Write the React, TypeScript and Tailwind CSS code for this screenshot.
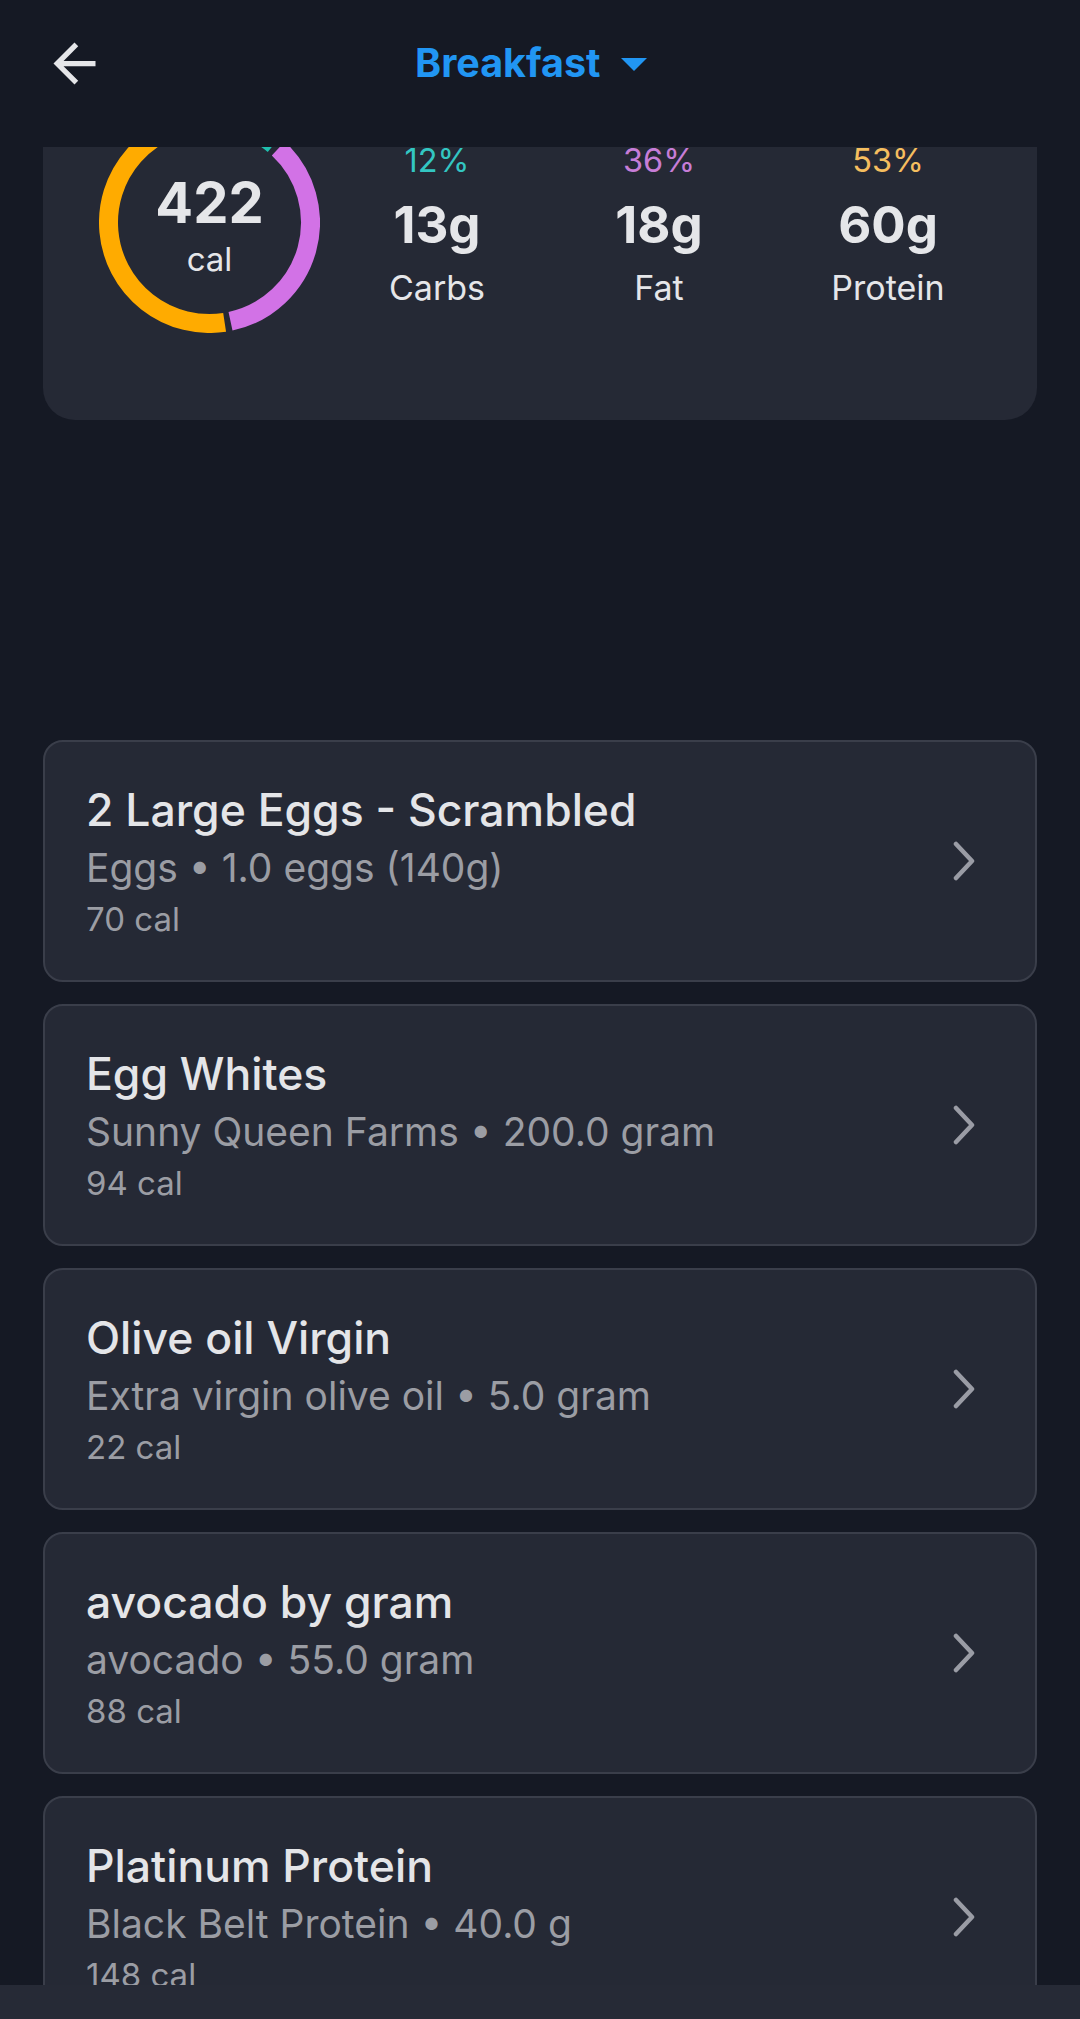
import React from 'react';

interface Food {
  name: string;
  detail: string;
  cal: number;
}

const foods: Food[] = [
  { name: '2 Large Eggs - Scrambled', detail: 'Eggs • 1.0 eggs (140g)', cal: 70 },
  { name: 'Egg Whites', detail: 'Sunny Queen Farms • 200.0 gram', cal: 94 },
  { name: 'Olive oil Virgin', detail: 'Extra virgin olive oil • 5.0 gram', cal: 22 },
  { name: 'avocado by gram', detail: 'avocado • 55.0 gram', cal: 88 },
  { name: 'Platinum Protein', detail: 'Black Belt Protein • 40.0 g', cal: 148 },
];

const macros = [
  { pct: '12%', grams: '13g', label: 'Carbs', color: 'text-[#33c6c2]', width: 'w-[222px]' },
  { pct: '36%', grams: '18g', label: 'Fat', color: 'text-[#c77dd7]', width: 'w-[222px]' },
  { pct: '53%', grams: '60g', label: 'Protein', color: 'text-[#f5be5f]', width: 'w-[236px]' },
];

// arco do anel, ângulos em graus a partir do topo no sentido horário
const arc = (cx: number, cy: number, r: number, from: number, to: number) => {
  const p = (a: number) => {
    const rad = (a * Math.PI) / 180;
    return `${cx + r * Math.sin(rad)} ${cy - r * Math.cos(rad)}`;
  };
  const large = to - from > 180 ? 1 : 0;
  return `M ${p(from)} A ${r} ${r} 0 ${large} 1 ${p(to)}`;
};

const CalorieRing: React.FC = () => {
  const total = 13 * 4 + 18 * 9 + 60 * 4;
  const parts = [
    { v: 13 * 4, c: '#1fbfae' },
    { v: 18 * 9, c: '#d272e6' },
    { v: 60 * 4, c: '#ffab00' },
  ];
  let start = 0;
  const gap = 1.7;
  return (
    <div className="relative w-[221px] h-[221px] shrink-0">
      <svg width="221" height="221" viewBox="0 0 221 221" className="absolute inset-0">
        {parts.map((s, i) => {
          const span = (s.v / total) * 360;
          const d = arc(110.5, 110.5, 101, start + gap, start + span - gap);
          start += span;
          return <path key={i} d={d} fill="none" stroke={s.c} strokeWidth={19} />;
        })}
      </svg>
      <div className="absolute inset-0 flex flex-col items-center justify-center text-[#e5e6e9]">
        <span className="text-[56px] font-bold leading-[58px] mt-[6px]">422</span>
        <span className="text-[33px] leading-[38px] mt-[8px]">cal</span>
      </div>
    </div>
  );
};

const FoodCard: React.FC<{ food: Food }> = ({ food }) => (
  <div className="h-[242px] shrink-0 rounded-[20px] border-2 border-[#3a3e4a] bg-[#252935] flex items-center pl-[41px] pr-[59px]">
    <div className="flex-1 min-w-0">
      <div className="text-[44.5px] leading-[52px] font-medium text-[#e4e5e8] truncate">{food.name}</div>
      <div className="mt-[8px] text-[39px] leading-[48px] text-[#9b9da4] truncate">{food.detail}</div>
      <div className="mt-[7px] text-[33px] leading-[40px] text-[#9b9da4]">{food.cal} cal</div>
    </div>
    <svg width="24" height="40" viewBox="0 0 24 40" className="shrink-0">
      <path d="M4 3 L20 20 L4 37" fill="none" stroke="#9a9ca5" strokeWidth="4.5" strokeLinecap="round" strokeLinejoin="round" />
    </svg>
  </div>
);

const App: React.FC = () => {
  return (
    <div className="w-[1080px] h-[2019px] flex flex-col bg-[#151924] overflow-hidden font-['Inter','Noto_Sans',sans-serif]">
      {/* Cabeçalho */}
      <div className="h-[147px] shrink-0 bg-[#151924]">
        <div className="h-[126px] flex items-center">
          <svg width="63" height="63" viewBox="0 0 24 24" className="ml-[43px] shrink-0">
            <path d="M20 11H7.83l5.59-5.59L12 4l-8 8 8 8 1.41-1.41L7.83 13H20v-2z" fill="#e5e6e9" />
          </svg>
          <div className="ml-[309px] flex items-center">
            <span className="text-[39.5px] font-bold text-[#2196f3] leading-[48px]">Breakfast</span>
            <svg width="26" height="13" viewBox="0 0 26 13" className="ml-[21px] mt-[2px]">
              <path d="M0 0 H26 L13 13 Z" fill="#2196f3" />
            </svg>
          </div>
        </div>
      </div>

      {/* Conteúdo rolado */}
      <div className="flex-1 overflow-hidden">
        <div className="mx-[43px] -mt-[67px] h-[340px] rounded-[32px] bg-[#252935] flex items-start pt-[32px] pl-[56px]">
          <CalorieRing />
          <div className="flex ml-[6px] mt-[29px]">
            {macros.map((m) => (
              <div key={m.label} className={`${m.width} flex flex-col items-center`}>
                <span className={`text-[32.5px] leading-[40px] ${m.color}`}>{m.pct}</span>
                <span className="mt-[12px] text-[51px] leading-[64px] font-bold text-[#e5e6e9]">{m.grams}</span>
                <span className="mt-[11px] text-[34px] leading-[40px] text-[#e5e6e9]">{m.label}</span>
              </div>
            ))}
          </div>
        </div>

        <div className="mx-[43px] mt-[320px] flex flex-col gap-[22px]">
          {foods.map((f) => (
            <FoodCard key={f.name} food={f} />
          ))}
        </div>
      </div>

      {/* Barra inferior */}
      <div className="h-[34px] shrink-0 bg-[#262a36]" />
    </div>
  );
};

export default App;
